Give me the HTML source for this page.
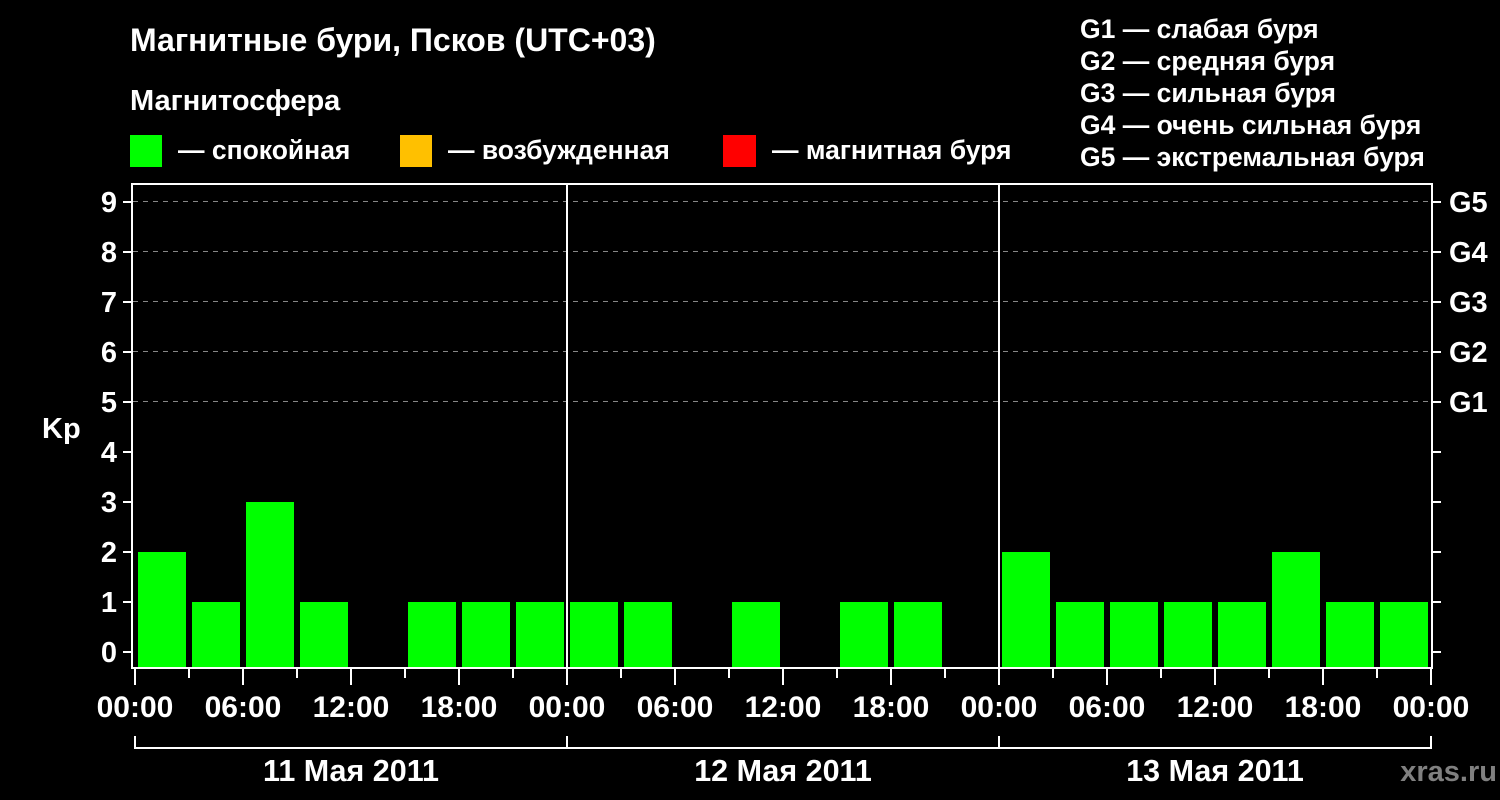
<!DOCTYPE html>
<html><head><meta charset="utf-8"><style>
html,body{margin:0;padding:0;background:#000;}
svg text{font-family:"Liberation Sans",Arial,sans-serif;font-weight:bold;fill:#fff;}
</style></head><body>
<svg width="1500" height="800" xmlns="http://www.w3.org/2000/svg" style="display:block">
<rect width="1500" height="800" fill="#000"/>
<text x="130" y="51" font-size="32">Магнитные бури, Псков (UTC+03)</text>
<text x="130" y="110" font-size="29">Магнитосфера</text>
<rect x="130" y="135" width="32" height="32" fill="#00ff00"/>
<text x="178" y="159" font-size="26.5">— спокойная</text>
<rect x="400" y="135" width="32" height="32" fill="#ffc000"/>
<text x="448" y="159" font-size="26.5">— возбужденная</text>
<rect x="723" y="135" width="33" height="32" fill="#ff0000"/>
<text x="772" y="159" font-size="26.5">— магнитная буря</text>
<g font-size="26.5">
<text x="1080" y="38">G1 — слабая буря</text>
<text x="1080" y="70">G2 — средняя буря</text>
<text x="1080" y="102">G3 — сильная буря</text>
<text x="1080" y="134">G4 — очень сильная буря</text>
<text x="1080" y="166">G5 — экстремальная буря</text>
</g>
<g stroke="#888" stroke-width="1" stroke-dasharray="5,5">
<line x1="133" y1="201.5" x2="1431" y2="201.5"/>
<line x1="133" y1="251.5" x2="1431" y2="251.5"/>
<line x1="133" y1="301.5" x2="1431" y2="301.5"/>
<line x1="133" y1="351.5" x2="1431" y2="351.5"/>
<line x1="133" y1="401.5" x2="1431" y2="401.5"/>
</g>
<g fill="#00ff00">
<rect x="138" y="552" width="48" height="116"/>
<rect x="192" y="602" width="48" height="66"/>
<rect x="246" y="502" width="48" height="166"/>
<rect x="300" y="602" width="48" height="66"/>
<rect x="408" y="602" width="48" height="66"/>
<rect x="462" y="602" width="48" height="66"/>
<rect x="516" y="602" width="48" height="66"/>
<rect x="570" y="602" width="48" height="66"/>
<rect x="624" y="602" width="48" height="66"/>
<rect x="732" y="602" width="48" height="66"/>
<rect x="840" y="602" width="48" height="66"/>
<rect x="894" y="602" width="48" height="66"/>
<rect x="1002" y="552" width="48" height="116"/>
<rect x="1056" y="602" width="48" height="66"/>
<rect x="1110" y="602" width="48" height="66"/>
<rect x="1164" y="602" width="48" height="66"/>
<rect x="1218" y="602" width="48" height="66"/>
<rect x="1272" y="552" width="48" height="116"/>
<rect x="1326" y="602" width="48" height="66"/>
<rect x="1380" y="602" width="48" height="66"/>
</g>
<g stroke="#fff" stroke-width="2" fill="none">
<rect x="132" y="184" width="1300" height="484"/>
<line x1="567" y1="184" x2="567" y2="668"/>
<line x1="999" y1="184" x2="999" y2="668"/>
<path d="M123 202H132M123 252H132M123 302H132M123 352H132M123 402H132M123 452H132M123 502H132M123 552H132M123 602H132M123 652H132"/>
<path d="M1432 202H1441M1432 252H1441M1432 302H1441M1432 352H1441M1432 402H1441M1432 452H1441M1432 502H1441M1432 552H1441M1432 602H1441M1432 652H1441"/>
<path d="M135 668V685M189 668V678M243 668V685M297 668V678M351 668V685M405 668V678M459 668V685M513 668V678M567 668V685M621 668V678M675 668V685M729 668V678M783 668V685M837 668V678M891 668V685M945 668V678M999 668V685M1053 668V678M1107 668V685M1161 668V678M1215 668V685M1269 668V678M1323 668V685M1377 668V678M1431 668V685"/>
<path d="M135 736V748H1431V736M567 736V748M999 736V748"/>
</g>
<g font-size="29" text-anchor="end">
<text x="117" y="212">9</text><text x="117" y="262">8</text><text x="117" y="312">7</text><text x="117" y="362">6</text><text x="117" y="412">5</text><text x="117" y="462">4</text><text x="117" y="512">3</text><text x="117" y="562">2</text><text x="117" y="612">1</text><text x="117" y="662">0</text>
</g>
<text x="42" y="438" font-size="29">Kp</text>
<g font-size="29">
<text x="1449" y="212">G5</text><text x="1449" y="262">G4</text><text x="1449" y="312">G3</text><text x="1449" y="362">G2</text><text x="1449" y="412">G1</text>
</g>
<g font-size="30" text-anchor="middle">
<text x="135" y="717">00:00</text><text x="243" y="717">06:00</text><text x="351" y="717">12:00</text><text x="459" y="717">18:00</text>
<text x="567" y="717">00:00</text><text x="675" y="717">06:00</text><text x="783" y="717">12:00</text><text x="891" y="717">18:00</text>
<text x="999" y="717">00:00</text><text x="1107" y="717">06:00</text><text x="1215" y="717">12:00</text><text x="1323" y="717">18:00</text>
<text x="1431" y="717">00:00</text>
<text x="351" y="781" font-size="30.5">11 Мая 2011</text><text x="783" y="781" font-size="30.5">12 Мая 2011</text><text x="1215" y="781" font-size="30.5">13 Мая 2011</text>
</g>
<text x="1497" y="781" font-size="29" text-anchor="end" style="fill:#808080">xras.ru</text>
</svg>
</body></html>
